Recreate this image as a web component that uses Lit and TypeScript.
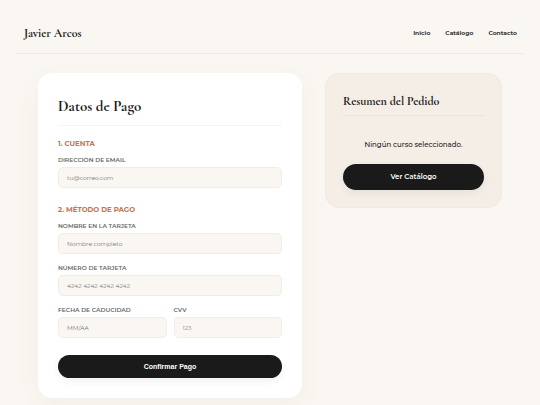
import { LitElement, html, css } from "lit";
import { customElement } from "lit/decorators.js";

interface Field {
  id: string;
  label: string;
  placeholder: string;
  type?: string;
}

const account: Field[] = [
  { id: "email", label: "Dirección de email", placeholder: "tu@correo.com", type: "email" },
];

const card: Field[] = [
  { id: "name", label: "Nombre en la tarjeta", placeholder: "Nombre completo" },
  { id: "number", label: "Número de tarjeta", placeholder: "4242 4242 4242 4242" },
];

const cardExtra: Field[] = [
  { id: "expiry", label: "Fecha de caducidad", placeholder: "MM/AA" },
  { id: "cvv", label: "CVV", placeholder: "123" },
];

@customElement("app-root")
export class AppRoot extends LitElement {
  static styles = css`
    :host {
      display: block;
      box-sizing: border-box;
      min-height: 100vh;
      padding: 14px 16px 7px;
      background: #faf7f2;
      color: #1a1a1a;
      font-family: Montserrat, Inter, sans-serif;
      --serif: "Cormorant Garamond", "Liberation Serif", serif;
    }
    *,
    *::before {
      box-sizing: border-box;
    }
    .header {
      display: flex;
      align-items: center;
      justify-content: space-between;
      height: 40px;
      padding: 0 7px 1px 8px;
      border-bottom: 1px solid #eeebe7;
    }
    .brand {
      color: inherit;
      text-decoration: none;
      font: 700 12px/16px var(--serif);
    }
    .nav {
      display: flex;
      gap: 15px;
    }
    .nav a {
      color: #333;
      text-decoration: none;
      font-size: 6px;
      font-weight: 700;
      line-height: 10px;
    }
    .main {
      display: grid;
      grid-template-columns: 264fr 177fr;
      align-items: start;
      gap: 23px;
      padding: 19px 22px 0;
    }
    .panel {
      padding: 20px;
      border-radius: 14px;
      background: #fff;
      box-shadow: 0 8px 24px rgba(90, 70, 40, 0.05);
    }
    .title,
    .subtitle {
      margin: 0;
      font-family: var(--serif);
      font-weight: 700;
    }
    .title {
      padding-bottom: 6px;
      border-bottom: 1px solid #f5f4f3;
      font-size: 15px;
      line-height: 26px;
    }
    .group {
      margin: 12px 0 0;
      padding: 0;
      border: 0;
      min-width: 0;
    }
    .group + .group {
      margin-top: 16px;
    }
    .legend {
      margin: 0 0 6px;
      padding: 0;
      color: #c87350;
      font-size: 7px;
      font-weight: 700;
      line-height: 12px;
      text-transform: uppercase;
    }
    .fields {
      display: grid;
      gap: 10px;
    }
    .pair {
      display: grid;
      grid-template-columns: 1fr 1fr;
      gap: 7px;
    }
    .field {
      display: grid;
      gap: 3px;
      min-width: 0;
    }
    .label {
      color: #666;
      font-size: 6px;
      font-weight: 600;
      line-height: 8px;
      text-transform: uppercase;
    }
    .input {
      width: 100%;
      height: 21px;
      padding: 0 8px;
      border: 1px solid #f1ece7;
      border-radius: 5px;
      background: #faf7f2;
      color: #1a1a1a;
      font: 400 6px/8px Montserrat, Inter, sans-serif;
    }
    .input::placeholder {
      color: #757575;
      opacity: 1;
    }
    .button {
      display: block;
      width: 100%;
      height: 23px;
      padding: 0;
      border: 0;
      border-radius: 13px;
      background: #1a1a1a;
      color: #fff;
      text-align: center;
      text-decoration: none;
      box-shadow: 0 3px 8px rgba(0, 0, 0, 0.06);
      font: 700 7px/23px "Liberation Sans", Arial, sans-serif;
    }
    .submit {
      margin-top: 17px;
    }
    .summary {
      padding: 17px;
      border: 1px solid #f5e9de;
      border-radius: 14px;
      background: #f5eee7;
    }
    .subtitle {
      padding-bottom: 4px;
      border-bottom: 1px solid #efe3d9;
      font-size: 12px;
      line-height: 20px;
    }
    .empty {
      margin: 21px 0 11px;
      text-align: center;
      font-size: 7px;
      font-weight: 500;
      line-height: 16px;
    }
    .browse {
      height: 26px;
      font-family: Montserrat, Inter, sans-serif;
      font-weight: 600;
      line-height: 26px;
    }
  `;

  private field(f: Field) {
    return html`<div class="field">
      <label class="label" for=${f.id}>${f.label}</label>
      <input class="input" id=${f.id} type=${f.type ?? "text"} placeholder=${f.placeholder} />
    </div>`;
  }

  render() {
    return html`
      <header class="header">
        <a class="brand" href="#">Javier Arcos</a>
        <nav class="nav">
          <a href="#inicio">Inicio</a>
          <a href="#catalogo">Catálogo</a>
          <a href="#contacto">Contacto</a>
        </nav>
      </header>
      <main class="main">
        <form class="panel" @submit=${(e: Event) => e.preventDefault()}>
          <h1 class="title">Datos de Pago</h1>
          <section class="group">
            <h2 class="legend">1. Cuenta</h2>
            <div class="fields">${account.map((f) => this.field(f))}</div>
          </section>
          <section class="group">
            <h2 class="legend">2. Método de pago</h2>
            <div class="fields">
              ${card.map((f) => this.field(f))}
              <div class="pair">${cardExtra.map((f) => this.field(f))}</div>
            </div>
          </section>
          <button class="button submit" type="submit">Confirmar Pago</button>
        </form>
        <aside class="summary">
          <h2 class="subtitle">Resumen del Pedido</h2>
          <p class="empty">Ningún curso seleccionado.</p>
          <a class="button browse" href="#catalogo">Ver Catálogo</a>
        </aside>
      </main>
    `;
  }
}
